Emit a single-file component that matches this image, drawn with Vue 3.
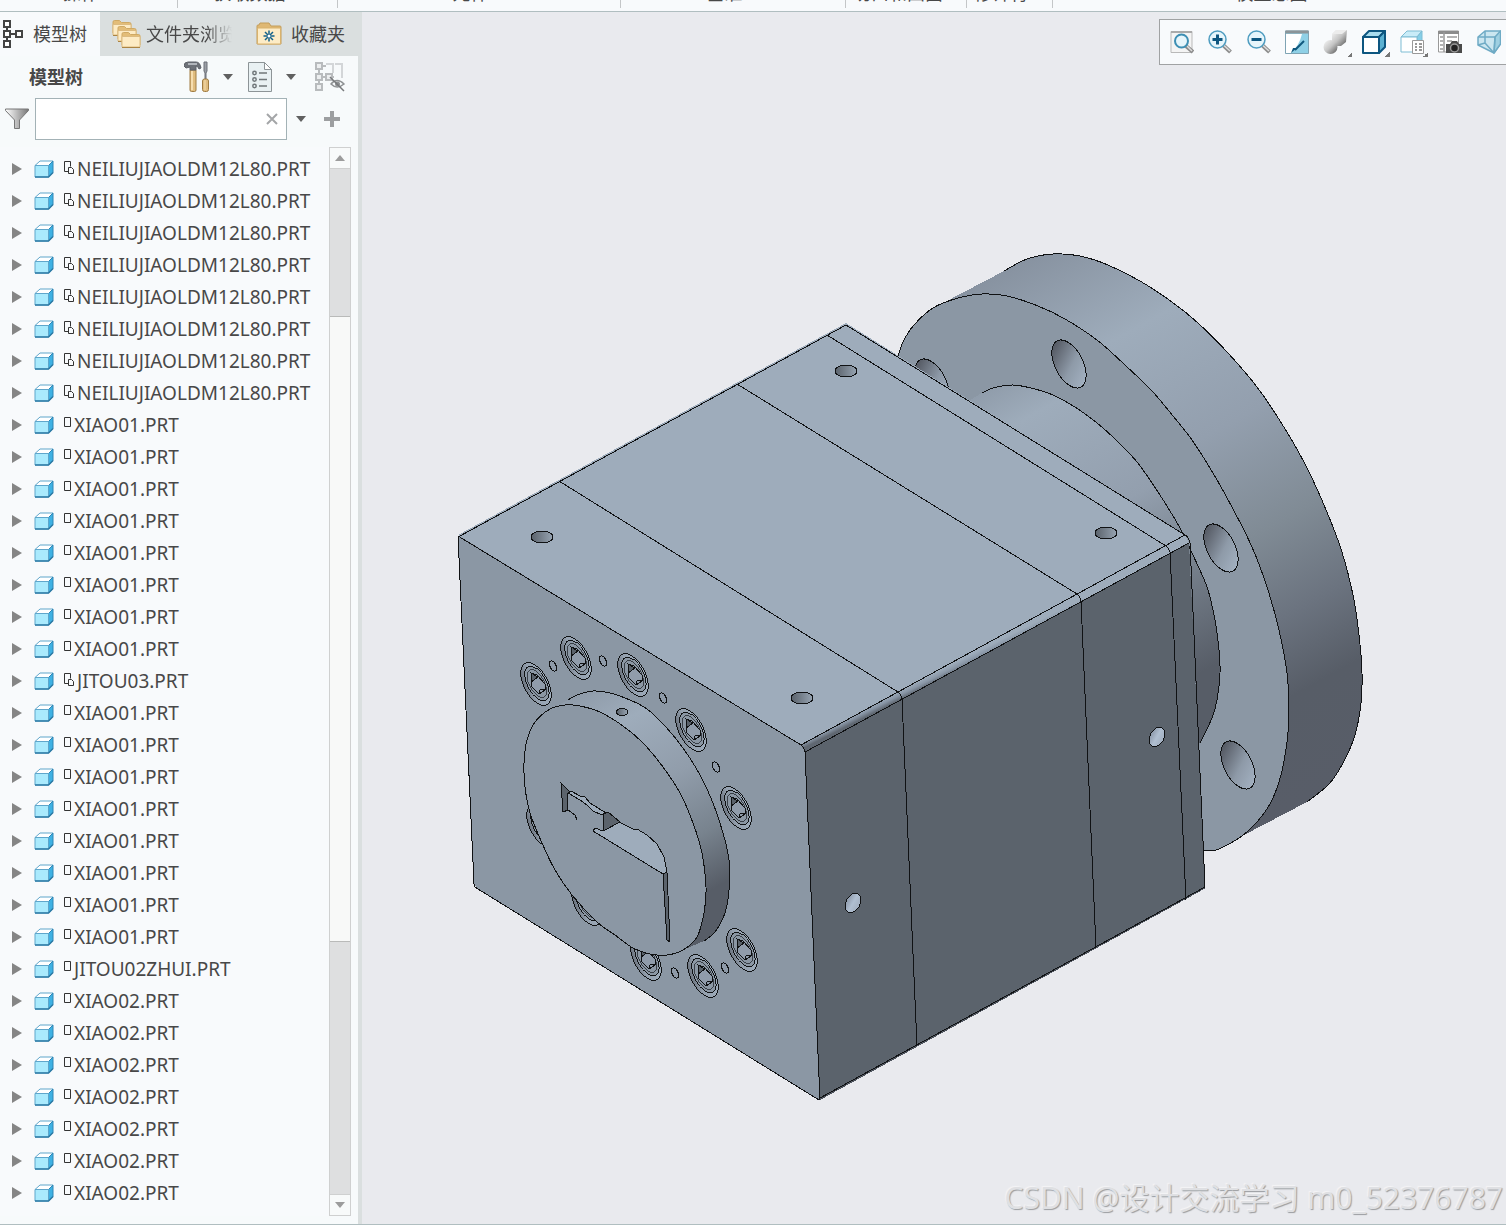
<script setup>
import { ref } from 'vue'

const groups = [
  { label: '操作', size: 178 },
  { label: '获取数据', size: 159 },
  { label: '元件', size: 283 },
  { label: '基准', size: 225 },
  { label: '切口和曲面', size: 121 },
  { label: '修饰符', size: 85 },
  { label: '模型意图', size: 455 },
]

const repeat = (name, linked, count) => Array.from({ length: count }, () => ({ name, linked }))
const parts = [
  ...repeat('NEILIUJIAOLDM12L80.PRT', true, 8),
  ...repeat('XIAO01.PRT', false, 8),
  ...repeat('JITOU03.PRT', true, 1),
  ...repeat('XIAO01.PRT', false, 8),
  ...repeat('JITOU02ZHUI.PRT', false, 1),
  ...repeat('XIAO02.PRT', false, 7),
]

const query = ref('')

// Smooth path through a list of points (Catmull-Rom converted to cubic Béziers)
function curve(pts, closed = false) {
  const n = pts.length
  const at = (i) => (closed ? pts[(i + n) % n] : pts[Math.max(0, Math.min(n - 1, i))])
  let d = `M${pts[0]}`
  for (let i = 0; i < (closed ? n : n - 1); i++) {
    const [a, b, c, e] = [at(i - 1), at(i), at(i + 1), at(i + 2)]
    d += `C${b[0] + (c[0] - a[0]) / 6},${b[1] + (c[1] - a[1]) / 6} ${c[0] - (e[0] - b[0]) / 6},${c[1] - (e[1] - b[1]) / 6} ${c}`
  }
  return d
}

const flangeFace = curve([
  [897, 360], [903, 342], [914, 325], [933, 308], [958, 298], [982, 294], [1007, 296], [1038, 306], [1065, 319],
  [1097, 340], [1125, 365], [1152, 391], [1173, 416], [1192, 440], [1213, 473], [1233, 509], [1252, 547],
  [1267, 587], [1279, 630], [1287, 673], [1289, 713], [1287, 742], [1281, 775], [1271, 802], [1257, 822],
  [1242, 836], [1227, 845], [1216, 850], [1204, 851],
])
const flangeRim = curve([
  [1004, 271], [1027, 259], [1053, 254], [1080, 256], [1108, 265], [1140, 281], [1172, 302], [1198, 323],
  [1228, 353], [1257, 387], [1282, 424], [1305, 464], [1324, 505], [1341, 549], [1353, 595], [1359, 635],
  [1362, 673], [1361, 703], [1355, 735], [1343, 763], [1329, 784], [1307, 802],
])
const hub = curve([
  [982, 393], [993, 388], [1013, 385], [1035, 389], [1053, 395], [1075, 407], [1097, 423], [1117, 441],
  [1137, 462], [1158, 492], [1180, 528], [1192, 553], [1207, 587], [1215, 620], [1219, 650], [1220, 673],
  [1217, 700], [1212, 718], [1200, 743],
])
const discFace = curve([
  [524, 763], [527, 740], [535, 722], [550, 709], [565, 705], [580, 706], [600, 712], [623, 726], [643, 743],
  [663, 767], [680, 793], [693, 823], [702, 853], [706, 887], [704, 913], [697, 937], [683, 950], [667, 955],
  [650, 954], [633, 948], [615, 935], [597, 922], [572, 895], [555, 870], [542, 843], [530, 813], [525, 787],
], true)
const discRim = curve([
  [568, 700], [577, 695], [593, 691], [610, 693], [630, 700], [647, 709], [665, 726], [683, 748], [700, 775],
  [713, 803], [723, 833], [729, 860], [729, 890], [725, 913], [715, 932], [704, 941],
])

const flangeHoles = [[932, 383], [1069, 364], [1221, 548], [1238, 765]]
const topHoles = [[846, 371], [542, 537], [1106, 533], [802, 698]]
const sideHoles = [[1157, 737], [853, 903]]
const bolts = [
  [536, 684], [576, 658], [633, 675], [691, 730], [736, 808], [742, 950], [703, 976], [646, 959],
  [542, 826], [587, 904],
]
const pinHoles = [[553, 666], [603, 661], [663, 698], [716, 767], [675, 973], [725, 968]]
</script>

<template>
  <div class="app">
    <header class="ribbon">
      <div v-for="g in groups" :key="g.label" class="group" :style="{ flexGrow: g.size }">
        <span>{{ g.label }}</span>
      </div>
    </header>

    <div class="work">
      <aside class="side">
        <nav class="tabs">
          <button class="tab active" type="button">
            <svg width="22" height="30" viewBox="0 0 22 30" fill="#fff" stroke="#444" stroke-width="2">
              <path d="M6 8v14M7 15h7" fill="none" />
              <path d="M3 2h6v6h-6zM3 12h6v6h-6zM3 22h6v6h-6zM15 12h6v6h-6z" />
            </svg>
            <span>模型树</span>
          </button>
          <button class="tab folders" type="button">
            <svg width="30" height="30" viewBox="0 0 30 30">
              <g v-for="p in [[0, 1], [5, 7], [9, 13]]" :key="p[0]" :transform="`translate(${p[0]} ${p[1]})`">
                <path d="M1 13V2q0-1.500 1.500-1.500h5l2 2h8q1.500 0 1.500 1.500v9z" fill="#e3bd78" stroke="#cfa964" />
                <path d="M1 15V4.500h18V15z" fill="#fdebc4" stroke="#dcbb80" />
                <path d="M1 15.500h18" stroke="#ab8443" />
              </g>
            </svg>
            <span class="fade">文件夹浏览器</span>
          </button>
          <button class="tab favs" type="button">
            <svg width="26" height="24" viewBox="0 0 26 24">
              <path d="M1 22V4q0-1 1-1h1l1-2h9l2 3h9q1 0 1 1v17z" fill="#dfb873" stroke="#c39d5b" />
              <rect x="1.500" y="6" width="23" height="16" rx="1" fill="#fdecc6" stroke="#d9b26c" />
              <path d="M13 8.500v11M7.500 14h11M9 10l8 8M17 10l-8 8" stroke="#14618a" stroke-width="1.500" />
              <circle cx="13" cy="14" r="1.500" fill="#fff" />
            </svg>
            <span>收藏夹</span>
          </button>
        </nav>

        <section class="panel">
          <div class="head">
            <h1>模型树</h1>
            <button class="tools" type="button" aria-label="设置">
              <svg width="26" height="32" viewBox="0 0 26 32">
                <path d="M6 9h6v20q0 1.500-1.500 1.500h-3q-1.500 0-1.500-1.500z" fill="#e0bd80" stroke="#a07c42" />
                <path d="M8 10v19" stroke="#f6deb0" stroke-width="2" />
                <path d="M1 2l3-1h8q4 0 5 6l-2 1q-1-3-3-3v4H6V6L2 7 0 5z" fill="#6d7178" stroke="#5d6168" />
                <path d="M4 3h9" stroke="#c8ccd2" stroke-width="1.500" />
                <path d="M20 1h3v9l-1 2v6h-1v-6l-1-2z" fill="#9a9ea5" stroke="#6b6f76" />
                <rect x="18.500" y="18" width="6" height="12.500" rx="2" fill="#e0bd80" stroke="#a07c42" />
                <path d="M21 19v10" stroke="#f6deb0" />
              </svg>
              <i class="caret"></i>
            </button>
            <button class="show" type="button" aria-label="显示">
              <svg width="24" height="30" viewBox="0 0 24 30">
                <path d="M.5.5h16l7 7v22H.5z" fill="#e9f1f3" stroke="#8d9497" />
                <path d="M16.500.5v7h7z" fill="#fff" stroke="#8d9497" />
                <g fill="none" stroke="#70777a" stroke-width="1.500">
                  <circle cx="6.500" cy="11" r="1.700" /><circle cx="6.500" cy="17.500" r="1.700" /><circle cx="6.500" cy="24" r="1.700" />
                  <path d="M11 11h8M11 17.500h8M11 24h8" />
                </g>
              </svg>
              <i class="caret"></i>
            </button>
            <button class="hide" type="button" aria-label="隐藏项">
              <svg width="30" height="30" viewBox="0 0 30 30" fill="none" stroke="#b8bbbd" stroke-width="2">
                <path d="M4 7v16M8 15h3M17 15h2M8 4h3" />
                <path d="M1 1h6v6h-6zM1 12h6v6h-6zM1 22h6v6h-6zM11 12h6v6h-6z" fill="#eceeef" />
                <path d="M11 2h7v9M20 2h7v14" stroke="#d3d6d8" />
                <path d="M16 22q6-7 13 0q-7 6-13 0z" stroke="#8e9193" stroke-width="1.500" />
                <circle cx="22.500" cy="22" r="2.500" fill="#8e9193" stroke="none" />
                <path d="M15 15l14 14" stroke="#77797b" stroke-width="1.500" />
              </svg>
            </button>
          </div>

          <div class="search">
            <svg class="funnel" width="24" height="22" viewBox="0 0 24 22">
              <defs>
                <linearGradient id="metal"><stop offset="0" stop-color="#fff" /><stop offset="1" stop-color="#777" /></linearGradient>
              </defs>
              <path d="M.5 1h23v1.500L14.500 12v8.500h-5V12L.5 2.500z" fill="url(#metal)" stroke="#777" />
            </svg>
            <label class="box">
              <input v-model="query" type="text" aria-label="搜索模型树" />
              <svg width="12" height="12" viewBox="0 0 12 12" stroke="#a4a6a8" stroke-width="2"><path d="M1 1l10 10M11 1L1 11" /></svg>
            </label>
            <button class="opts" type="button" aria-label="搜索选项"><i class="caret"></i></button>
            <button class="add" type="button" aria-label="添加">
              <svg width="16" height="16" viewBox="0 0 16 16" stroke="#9c9ea0" stroke-width="4"><path d="M8 0v16M0 8h16" /></svg>
            </button>
          </div>

          <div class="body">
            <ul class="tree">
              <li v-for="(p, i) in parts" :key="i">
                <button type="button" class="toggle" :aria-label="`展开 ${p.name}`"></button>
                <svg width="20" height="18" viewBox="0 0 20 18">
                  <path d="M1 5.500L6 1h13l-4.500 4.500z" fill="#fff" stroke="#5fa6cb" />
                  <path d="M14.500 5.500L19 1v11.500L14.500 17z" fill="#3fb1e3" stroke="#2f86b5" />
                  <path d="M1 5.500h13.500V17H1z" fill="#aaeafd" stroke="#5fa6cb" />
                  <path d="M1 17h13.500l4.500-4.500" fill="none" stroke="#2e7ba5" stroke-width="1.500" />
                </svg>
                <svg v-if="p.linked" class="mark" width="13" height="16" viewBox="0 0 13 16" fill="none" stroke="#333">
                  <path d="M5 11.500H1.500v-10h6v5M5.500 13.500v-6h3l2 2v4z" />
                </svg>
                <svg v-else class="mark" width="10" height="16" viewBox="0 0 10 16" fill="none" stroke="#333">
                  <path d="M1.500 1.500h6v9h-6z" />
                </svg>
                <span>{{ p.name }}</span>
              </li>
            </ul>
            <div class="scroll">
              <button type="button" class="step up" aria-label="向上滚动"></button>
              <div class="track"><div class="thumb"></div></div>
              <button type="button" class="step down" aria-label="向下滚动"></button>
            </div>
          </div>
        </section>
      </aside>

      <main class="canvas">
        <svg class="model" viewBox="362 12 1144 1212" role="img" aria-label="三维模型">
          <defs>
            <linearGradient id="rim" gradientUnits="userSpaceOnUse" x1="344" y1="629" x2="638" y2="1166">
              <stop offset="0" stop-color="#8792a0" /><stop offset=".19" stop-color="#9eacbb" />
              <stop offset=".4" stop-color="#939fae" /><stop offset=".58" stop-color="#808b95" />
              <stop offset=".72" stop-color="#6b737f" /><stop offset=".84" stop-color="#575d67" />
              <stop offset="1" stop-color="#585d68" />
            </linearGradient>
            <linearGradient id="hub" gradientUnits="userSpaceOnUse" x1="384" y1="702" x2="576" y2="1052">
              <stop offset="0" stop-color="#8b97a5" /><stop offset=".15" stop-color="#9eacbb" />
              <stop offset=".45" stop-color="#939fae" /><stop offset=".62" stop-color="#7d8894" />
              <stop offset=".8" stop-color="#666e79" /><stop offset=".92" stop-color="#575d67" />
            </linearGradient>
            <linearGradient id="disc" gradientUnits="userSpaceOnUse" x1="420" y1="768" x2="557" y2="1017">
              <stop offset="0" stop-color="#8b97a5" /><stop offset=".2" stop-color="#9eacbb" />
              <stop offset=".45" stop-color="#919dab" /><stop offset=".68" stop-color="#78838e" />
              <stop offset=".87" stop-color="#575d67" /><stop offset="1" stop-color="#575d67" />
            </linearGradient>
            <linearGradient id="bore" x1=".2" y1="0" x2=".6" y2="1">
              <stop offset=".1" stop-color="#575c66" /><stop offset=".6" stop-color="#8e9aa8" /><stop offset="1" stop-color="#a2b0c0" />
            </linearGradient>
            <linearGradient id="pit">
              <stop offset="0" stop-color="#59616a" /><stop offset="1" stop-color="#97a4b2" />
            </linearGradient>
            <linearGradient id="recess" x1="0" y1="0" x2="1" y2=".4">
              <stop offset="0" stop-color="#565c66" /><stop offset=".45" stop-color="#94a0ae" /><stop offset="1" stop-color="#9eacbb" />
            </linearGradient>
            <linearGradient id="shine">
              <stop offset="0" stop-color="#8d99aa" /><stop offset=".5" stop-color="#b0bfd1" /><stop offset="1" stop-color="#a3b0c1" />
            </linearGradient>
            <linearGradient id="fillet" gradientUnits="userSpaceOnUse" x1="896" y1="692" x2="900" y2="700">
              <stop offset="0" stop-color="#9eacbb" /><stop offset=".5" stop-color="#8996a6" /><stop offset="1" stop-color="#5f6771" />
            </linearGradient>
            <g id="bolt">
              <ellipse rx="12" ry="23.500" transform="rotate(-28)" fill="url(#recess)" />
              <ellipse cx="1" cy="0" rx="9.500" ry="19" transform="rotate(-28)" fill="#8b97a4" />
              <ellipse cx="1" cy="0" rx="7.500" ry="15.500" transform="rotate(-28)" fill="#8b97a4" stroke="#3a4048" />
              <path d="M-5-11L1-9 9 0 9 6 3 10-4 3z" fill="#909cab" />
              <path d="M-5-11L2-7-5-2z" fill="#59616a" />
              <path d="M3 10L4 6 9 5" fill="none" />
            </g>
          </defs>

          <path :d="flangeRim + 'L1242,836L1100,600L943,303Z'" fill="url(#rim)" stroke="none" />
          <path :d="flangeRim" fill="none" />
          <path :d="flangeFace + 'L1100,700Z'" fill="#8b97a4" stroke="none" />
          <path :d="flangeFace" fill="none" />
          <ellipse
            v-for="h in flangeHoles" :key="'f' + h" rx="14" ry="26" fill="url(#bore)"
            :transform="`translate(${h[0]} ${h[1]}) rotate(-27)`"
          />
          <path :d="hub + 'L1100,650L970,400Z'" fill="url(#hub)" stroke="none" />
          <path :d="hub" fill="none" />

          <path d="M846 324L1185 535 1189 543 1205 887 820 1100 818 1100 478 889 474 884 458 536z" fill="#8b97a4" stroke="none" />
          <path d="M805 752L1189 543 1205 888 820 1100z" fill="#5b636c" stroke="none" />
          <path d="M458 535L846 323 1185 535 801 745z" fill="#9eacbb" stroke="none" />
          <path d="M801 745L1185 535 1189 543 805 752z" fill="url(#fillet)" stroke="none" />
          <path d="M819 1100L1205 888" fill="none" stroke="#4d535c" />
          <path
            fill="none"
            d="M460 536L846 325L1185 535Q1189 537 1190 543L1205 887L820 1098M819 1100L478 889Q474 887 474 884L458 536
               M458 536L801 745M801 745L1185 535M805 752L1189 543M801 745Q804 747 805 752L820 1100
               M559 481L898 692Q901 694 902 699L917 1046M737 384L1077 594Q1080 596 1081 601L1096 948
               M827 335L1166 546Q1169 548 1170 552L1186 900"
          />

          <ellipse v-for="h in topHoles" :key="'t' + h" :cx="h[0]" :cy="h[1]" rx="11" ry="6" fill="url(#pit)" />
          <ellipse
            v-for="h in sideHoles" :key="'s' + h" rx="7" ry="10.500" fill="url(#shine)"
            :transform="`translate(${h[0]} ${h[1]}) rotate(28)`"
          />
          <use v-for="b in bolts" :key="'b' + b" href="#bolt" :x="b[0]" :y="b[1]" />
          <ellipse
            v-for="h in pinHoles" :key="'p' + h" rx="3" ry="5.500" fill="#8e9aa8"
            :transform="`translate(${h[0]} ${h[1]}) rotate(-25)`"
          />

          <path :d="discRim + 'L683,950L600,850L545,712Z'" fill="url(#disc)" stroke="none" />
          <path :d="discRim" fill="none" />
          <path :d="discFace" fill="#8b97a4" />
          <ellipse cx="622" cy="712" rx="5.500" ry="3.500" fill="url(#pit)" />

          <path d="M561 783L570 792 567 794 567 810 563 812z" fill="#5b636c" />
          <path d="M563 812L568 810 575 815 577 820" fill="none" />
          <path d="M568 793L571 791 580 796 585 797 590 803 606 813 602 815 593 811 587 805 580 800z" fill="#9eacbb" />
          <path d="M603 831L619 822 633 829 637 829 647 835 657 844 664 857 667 872 663 874 593 831 595 828z" fill="#9eacbb" />
          <path d="M603 814L608 812 620 822 603 831z" fill="#5b636c" />
          <path d="M663 874L667 872 670 942 667 940z" fill="#5b636c" />
        </svg>

        <div class="toolbar" role="toolbar" aria-label="视图">
          <button type="button" aria-label="重新调整">
            <svg viewBox="0 0 24 24"><path d="M1 1.500h21v21H1z" fill="#f4f4f4" stroke="#b9b9b9" /><path d="M1 2h21" stroke="#aaa" stroke-width="2" /><path d="M16 16l7 6" stroke="#8c8c8c" stroke-width="4" /><path d="M17 16l5 5" stroke="#ddd" stroke-width="1.500" /><circle cx="11.500" cy="11" r="6.500" fill="#e6f5fb" stroke="#3d8fb4" stroke-width="2" /></svg>
          </button>
          <button type="button" aria-label="放大">
            <svg viewBox="0 0 24 24"><path d="M15 15l7.500 7" stroke="#8c8c8c" stroke-width="4" /><path d="M15.500 15l6.500 6" stroke="#ddd" stroke-width="1.500" /><circle cx="9.500" cy="9.500" r="8.500" fill="#e6f5fb" stroke="#4e9cc0" stroke-width="1.500" /><path d="M9.500 4.500v10M4.500 9.500h10" stroke="#0d5680" stroke-width="3" /></svg>
          </button>
          <button type="button" aria-label="缩小">
            <svg viewBox="0 0 24 24"><path d="M15 15l7.500 7" stroke="#8c8c8c" stroke-width="4" /><path d="M15.500 15l6.500 6" stroke="#ddd" stroke-width="1.500" /><circle cx="9.500" cy="9.500" r="8.500" fill="#e6f5fb" stroke="#4e9cc0" stroke-width="1.500" /><path d="M4.500 9.500h10" stroke="#0d5680" stroke-width="3" /></svg>
          </button>
          <button type="button" aria-label="重画">
            <svg viewBox="0 0 24 24"><path d="M.5 1h23v22.500H.5z" fill="#8fd0e6" stroke="#7fa4b4" /><path d="M1 4h16q-3 12-11 19H1z" fill="#fff" /><path d="M.5 2h23" stroke="#8c9599" stroke-width="3" /><path d="M19 11l-9 9" stroke="#10587e" stroke-width="2" /><path d="M12 18l-6 5 2-5z" fill="#10587e" /></svg>
          </button>
          <button type="button" aria-label="渲染" class="menu">
            <svg viewBox="0 0 24 24"><defs><linearGradient id="ball" x2="1" y2="1"><stop offset="0" stop-color="#fafafa" /><stop offset=".5" stop-color="#c4c4c4" /><stop offset="1" stop-color="#555" /></linearGradient></defs><path d="M9 4l4-4h11l-1 12-5 4H9z" fill="url(#ball)" /><path d="M9 4l4-4h11l-5 4z" fill="#ececec" /><circle cx="7.500" cy="17" r="7" fill="url(#ball)" /></svg>
          </button>
          <button type="button" aria-label="显示样式" class="menu">
            <svg viewBox="0 0 24 24" stroke="#0d5680" stroke-width="2" stroke-linejoin="round"><path d="M1 7l6-6h16l-6 6z" fill="#a8dcee" /><path d="M17 7l6-6v16l-6 6z" fill="#5bb1d2" /><path d="M1 7h16v16H1z" fill="#fff" /></svg>
          </button>
          <button type="button" aria-label="已保存方向" class="menu">
            <svg viewBox="0 0 24 24" stroke="#7fbdd4"><path d="M1 7l6-6h15l-5 6z" fill="#c9ecf8" /><path d="M17 7l5-6v16l-5 5z" fill="#86cfe8" /><path d="M1 7h16v15H1z" fill="#fff" /><path d="M12.500 10.500h11v13h-11z" fill="#fff" stroke="#999" /><path d="M15 14h2M19 14h3M15 17h2M19 17h3M15 20h2M19 20h3" stroke="#777" stroke-width="1.500" /></svg>
          </button>
          <button type="button" aria-label="视图管理器">
            <svg viewBox="0 0 24 24"><path d="M.5 1h20v21H.5z" fill="#fff" stroke="#999" /><path d="M0 2.500h21" stroke="#8c8c8c" stroke-width="3" /><path d="M6 2v20M9 7h10M9 11h5M2 7h3M2 11h3M2 15h3M2 19h3" stroke="#999" stroke-width="1.500" /><path d="M8 14h4l2-3h5l2 3h3v9H8z" fill="#4a4a4a" /><circle cx="16.500" cy="18" r="4" fill="#222" stroke="#999" stroke-width="1.500" /></svg>
          </button>
          <button type="button" aria-label="透视图">
            <svg viewBox="0 0 24 24" stroke="#6fabc5" stroke-width="1.500" stroke-linejoin="round"><path d="M1 7L8 1h15.500v13L17 23 1 15z" fill="#cbe6f0" /><path d="M18 7l5.500-6v13L17 23z" fill="#9fd0e2" /><path d="M1 7h17l-1 16M8 1v12l9 10M1 15l7-2" fill="none" /></svg>
          </button>
        </div>

        <p class="watermark">CSDN @设计交流学习 m0_52376787</p>
      </main>
    </div>
  </div>
</template>

<style>
body {
  margin: 0;
}
</style>

<style scoped>
.app {
  display: flex;
  flex-direction: column;
  box-sizing: border-box;
  height: 100vh;
  overflow: hidden;
  border-bottom: 1px solid #b0bec0;
  background: #f8fafc;
  color: #484848;
  font: 18px/24px "Noto Sans", "Noto Sans CJK SC", sans-serif;
}
button {
  display: flex;
  align-items: center;
  padding: 0;
  border: 0;
  background: none;
  color: inherit;
  font: inherit;
}
svg {
  flex: none;
}

.ribbon {
  display: flex;
  flex: none;
  height: 11px;
  overflow: hidden;
  border-bottom: 1px solid #b0bec0;
}
.group {
  display: flex;
  flex: 1 1 0;
  align-items: flex-end;
  justify-content: center;
  box-sizing: border-box;
  min-width: 0;
  height: 8px;
  border-right: 1px solid #c4c6c8;
  white-space: nowrap;
}
.group:last-child {
  border-right: 0;
}
.group span {
  margin: 0 16px 3px 0;
}

.work {
  display: flex;
  flex: 1;
  min-height: 0;
}
.side {
  display: flex;
  flex: none;
  flex-direction: column;
  width: 362px;
}
.tabs {
  display: flex;
  flex: none;
  height: 44px;
  background: #dadfdf;
}
.tab.active {
  gap: 10px;
  width: 100px;
  padding-left: 1px;
  background: #f8fafc;
}
.tab.folders {
  gap: 4px;
  width: 132px;
  padding-left: 12px;
}
.tab.favs {
  gap: 9px;
  margin-left: 24px;
}
.tab {
  white-space: nowrap;
}
.fade {
  overflow: hidden;
  mask-image: linear-gradient(to right, #000 70%, transparent);
}
.panel {
  display: flex;
  flex: 1;
  flex-direction: column;
  min-height: 0;
  border-right: 4px solid #dadfdf;
  background: #f7fafb;
}
.head {
  display: flex;
  flex: none;
  align-items: center;
  height: 42px;
  padding: 0 13px 0 29px;
}
h1 {
  flex: 1;
  margin: 0;
  font-size: 18px;
  line-height: 24px;
}
.caret {
  width: 0;
  border: 5px solid transparent;
  border-top: 6px solid #606060;
  border-bottom: 0;
}
.tools {
  gap: 13px;
}
.show {
  gap: 14px;
  margin-left: 15px;
}
.hide {
  margin-left: 19px;
}
.search {
  display: flex;
  flex: none;
  align-items: center;
  padding-left: 5px;
}
.box {
  display: flex;
  flex: none;
  align-items: center;
  box-sizing: border-box;
  width: 252px;
  height: 42px;
  margin-left: 6px;
  padding-right: 8px;
  border: 1px solid #a3b2b6;
  background: #fff;
}
.box input {
  flex: 1;
  min-width: 0;
  border: 0;
  outline: 0;
  background: none;
  font: inherit;
}
.opts {
  margin-left: 9px;
}
.add {
  margin-left: 18px;
}
.body {
  display: flex;
  flex: 1;
  justify-content: space-between;
  min-height: 0;
  padding: 7px 7px 8px 0;
}
.tree {
  flex: 1;
  margin: 0;
  padding: 6px 0 0;
  overflow: hidden;
  list-style: none;
  background: #f8fafc;
}
li {
  display: flex;
  align-items: center;
  height: 32px;
  padding-left: 12px;
  font-size: 19px;
  white-space: nowrap;
}
.toggle {
  margin-right: 12px;
  border: 6px solid transparent;
  border-left: 10px solid #858585;
  border-right: 0;
}
.mark {
  margin: 0 1px 0 9px;
  padding-bottom: 3px;
}
.scroll {
  display: flex;
  flex: none;
  flex-direction: column;
  box-sizing: border-box;
  width: 22px;
  border: 1px solid #cfd0d0;
  background: #f8fafa;
}
.step {
  justify-content: center;
  height: 20px;
}
.step::before {
  border: 5px solid transparent;
  content: "";
}
.up::before {
  border-top: 0;
  border-bottom: 6px solid #9c9c9c;
}
.down::before {
  border-top: 6px solid #9c9c9c;
  border-bottom: 0;
}
.track {
  flex: 1;
  padding-top: 147px;
  border: solid #cfd0d0;
  border-width: 1px 0;
  background: #dedfe0;
}
.thumb {
  box-sizing: border-box;
  height: 626px;
  border: solid #b9bab9;
  border-width: 1px 0;
  background: #f8f9f8;
}

.canvas {
  position: relative;
  flex: 1;
  min-width: 0;
  overflow: hidden;
  background: #e9eaee;
}
.model {
  display: block;
  width: 100%;
  height: 100%;
  stroke: #101214;
  stroke-width: 1;
  shape-rendering: crispEdges;
}
.toolbar {
  position: absolute;
  top: 7px;
  right: -3px;
  display: flex;
  box-sizing: border-box;
  width: 350px;
  height: 46px;
  padding-left: 3px;
  border: 1px solid #a0a2a3;
  background: #f8fafc;
}
.toolbar button {
  position: relative;
  flex: 1;
  justify-content: center;
}
.toolbar svg {
  width: 24px;
  height: 24px;
}
.menu::after {
  position: absolute;
  right: 3px;
  bottom: 7px;
  width: 5px;
  height: 5px;
  background: linear-gradient(135deg, transparent 50%, #777 50%);
  content: "";
}
.watermark {
  position: absolute;
  right: 3px;
  bottom: 8px;
  margin: 0;
  color: #dfe0e3;
  font: 30px/36px "Noto Sans", "Noto Sans CJK SC", sans-serif;
  text-shadow: 1px 1px 1px #9b9da0, -1px -1px 1px #f4f4f6;
  white-space: nowrap;
}
</style>
